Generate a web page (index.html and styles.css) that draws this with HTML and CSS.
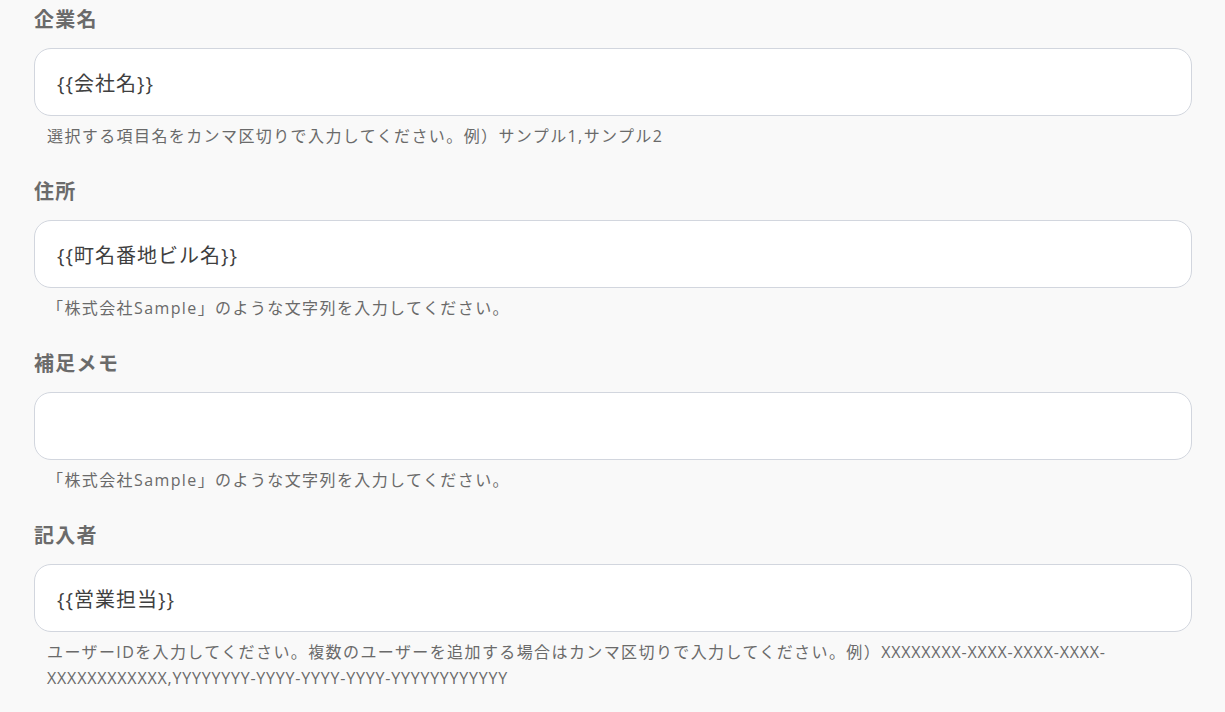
FILE: index.html
```html
<!DOCTYPE html>
<html lang="ja">
<head>
<meta charset="utf-8">
<link rel="stylesheet" href="styles.css">
</head>
<body>
<div class="form">
  <div class="field">
    <div class="label">企業名</div>
    <div class="input">{{会社名}}</div>
    <div class="help">選択する項目名をカンマ区切りで入力してください。例）サンプル1,サンプル2</div>
  </div>
  <div class="field">
    <div class="label">住所</div>
    <div class="input">{{町名番地ビル名}}</div>
    <div class="help">「株式会社Sample」のような文字列を入力してください。</div>
  </div>
  <div class="field">
    <div class="label">補足メモ</div>
    <div class="input"></div>
    <div class="help">「株式会社Sample」のような文字列を入力してください。</div>
  </div>
  <div class="field">
    <div class="label">記入者</div>
    <div class="input">{{営業担当}}</div>
    <div class="help">ユーザーIDを入力してください。複数のユーザーを追加する場合はカンマ区切りで入力してください。例）<span class="code">XXXXXXXX-XXXX-XXXX-XXXX-XXXXXXXXXXXX,YYYYYYYY-YYYY-YYYY-YYYY-YYYYYYYYYYYY</span></div>
  </div>
</div>
</body>
</html>
```
FILE: styles.css
```css
html, body {
  margin: 0;
  padding: 0;
  background: #f9f9f9;
}
body {
  font-family: "Open Sans", "Noto Sans CJK JP", sans-serif;
  color: #666;
}
.form {
  display: flex;
  flex-direction: column;
  gap: 31px;
  padding: 8px 33px 0 34px;
}
.field {
  display: flex;
  flex-direction: column;
}
.label {
  font-size: 20px;
  font-weight: bold;
  line-height: 24px;
  letter-spacing: 1.3px;
  color: #6b6b6b;
  margin-bottom: 16px;
}
.input {
  box-sizing: border-box;
  height: 68px;
  border: 1px solid #d2d6de;
  border-radius: 17px;
  background: #fff;
  padding: 0 22px;
  font-size: 20px;
  letter-spacing: 1px;
  color: #3f3f3f;
  display: flex;
  align-items: center;
}
.help {
  margin-top: 7px;
  padding-left: 13px;
  font-size: 16px;
  line-height: 26px;
  letter-spacing: 1.4px;
  color: #6a6a6a;
}
.code {
  letter-spacing: 0.8px;
}
```
